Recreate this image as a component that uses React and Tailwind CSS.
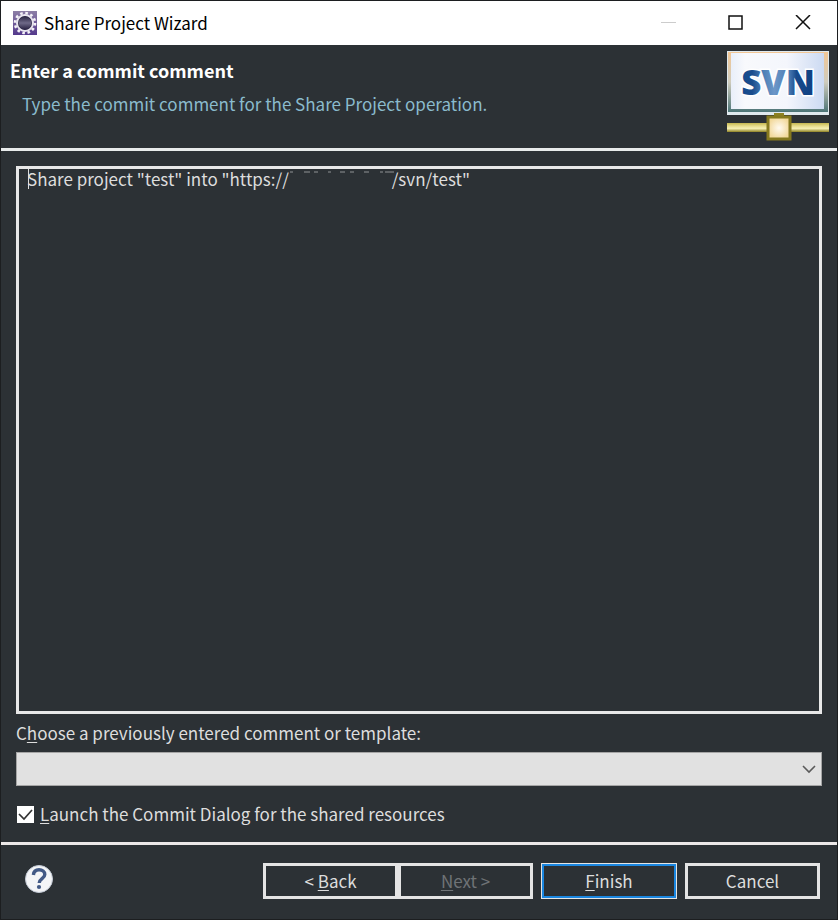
import { useState } from "react";

// gap left in the message where the host name is hidden
const HIDDEN_HOST = " ".repeat(27);

function EclipseIcon() {
  return (
    <svg width="24" height="24" viewBox="0 0 24 24" aria-hidden="true">
      <defs>
        <linearGradient id="eclipse-bg" x1="0" y1="0" x2="0" y2="1">
          <stop offset="0" stopColor="#8d7fa6" />
          <stop offset="1" stopColor="#54398c" />
        </linearGradient>
        <linearGradient id="eclipse-core" x1="0" y1="0" x2="0" y2="1">
          <stop offset="0" stopColor="#2b2644" />
          <stop offset="0.5" stopColor="#6f6a88" />
          <stop offset="1" stopColor="#2a2444" />
        </linearGradient>
      </defs>
      <rect width="24" height="24" fill="url(#eclipse-bg)" />
      <circle cx="12" cy="12" r="10" fill="none" stroke="#f4f2f7" strokeWidth="2.6" strokeDasharray="2.6 2.636" />
      <circle cx="12" cy="12" r="8" fill="#2b2545" stroke="#e9e6ef" strokeWidth="2" />
      <circle cx="12" cy="12" r="6.4" fill="url(#eclipse-core)" />
    </svg>
  );
}

function SvnLogo() {
  return (
    <svg width="102" height="90" viewBox="0 0 102 90" role="img" aria-label="SVN">
      <defs>
        <linearGradient id="svn-frame" x1="0" y1="0" x2="0" y2="1">
          <stop offset="0" stopColor="#f3c795" />
          <stop offset="0.5" stopColor="#cfccbd" />
          <stop offset="1" stopColor="#4d7577" />
        </linearGradient>
        <linearGradient id="svn-screen" x1="0" y1="0" x2="1" y2="0">
          <stop offset="0" stopColor="#e9effa" />
          <stop offset="0.15" stopColor="#f8f9fc" />
          <stop offset="0.6" stopColor="#f4f6fc" />
          <stop offset="1" stopColor="#ccdaf2" />
        </linearGradient>
        <linearGradient id="svn-text" x1="0" y1="0" x2="1" y2="0">
          <stop offset="0" stopColor="#174a8c" />
          <stop offset="0.15" stopColor="#1a4d8d" />
          <stop offset="0.3" stopColor="#4c7fb6" />
          <stop offset="0.45" stopColor="#6c97c8" />
          <stop offset="0.65" stopColor="#4a7ab2" />
          <stop offset="0.75" stopColor="#174a8c" />
          <stop offset="1" stopColor="#0f3f80" />
        </linearGradient>
        <linearGradient id="svn-pipe" x1="0" y1="0" x2="0" y2="1">
          <stop offset="0" stopColor="#c4b750" />
          <stop offset="0.3" stopColor="#e3d886" />
          <stop offset="0.6" stopColor="#f6f0b4" />
          <stop offset="1" stopColor="#8d8122" />
        </linearGradient>
        <radialGradient id="svn-node">
          <stop offset="0" stopColor="#fffaf0" />
          <stop offset="1" stopColor="#f2d99c" />
        </radialGradient>
      </defs>
      <rect width="102" height="64" fill="#e0e9ee" />
      <rect x="1" y="1" width="100" height="60" fill="url(#svn-frame)" />
      <rect x="4" y="2" width="93" height="56" fill="url(#svn-screen)" />
      <text
        x="51"
        y="44"
        textAnchor="middle"
        fontFamily="'Open Sans', sans-serif"
        fontWeight="800"
        fontSize="35"
        fill="url(#svn-text)"
        stroke="#ffffff"
        strokeWidth="3"
        paintOrder="stroke"
      >
        SVN
      </text>
      <rect x="47" y="62" width="10" height="5" fill="#8d8122" />
      <rect x="0" y="72" width="102" height="9" fill="url(#svn-pipe)" />
      <rect x="41" y="66" width="22" height="22" fill="url(#svn-node)" stroke="#85791f" strokeWidth="3" />
    </svg>
  );
}

function HelpIcon() {
  return (
    <svg width="30" height="30" viewBox="0 0 30 30" fill="none" aria-hidden="true">
      <circle cx="15" cy="16" r="13.5" fill="#f4f5f7" stroke="#c3cad6" />
      <path d="M9.400 12C9.700 8.500 12 6.800 15 6.800c3.400 0 5.800 1.700 5.800 4.600 0 4.200-5.600 4.200-5.600 8.600" stroke="#435a86" strokeWidth="3.400" />
      <circle cx="15" cy="24" r="2.100" fill="#435a86" />
    </svg>
  );
}

function TitleBar() {
  return (
    <div className="flex h-11 items-center justify-between bg-white pl-3 pr-[18px] text-black">
      <div className="flex items-center gap-[7px]">
        <EclipseIcon />
        <span>Share Project Wizard</span>
      </div>
      <div className="flex gap-[35px]">
        <button type="button" aria-label="Minimize" disabled className="flex size-8 items-center justify-center">
          <svg width="16" height="16" viewBox="0 0 16 16">
            <path d="M0 7.500h15" stroke="#cccccc" />
          </svg>
        </button>
        <button type="button" aria-label="Maximize" className="flex size-8 items-center justify-center">
          <svg width="16" height="16" viewBox="0 0 16 16" fill="none">
            <rect x="1" y="1" width="13" height="13" stroke="#111111" strokeWidth="1.500" />
          </svg>
        </button>
        <button type="button" aria-label="Close" className="flex size-8 items-center justify-center">
          <svg width="16" height="16" viewBox="0 0 16 16">
            <path d="M1 0l14 14M15 0L1 14" stroke="#111111" strokeWidth="1.500" />
          </svg>
        </button>
      </div>
    </div>
  );
}

export default function App() {
  const [comment, setComment] = useState(`Share project "test" into "https://${HIDDEN_HOST}/svn/test"`);
  const [template, setTemplate] = useState("");
  const [launch, setLaunch] = useState(true);

  return (
    <div className="flex min-h-screen flex-col border border-[#1c1e20] bg-[#2c3135] font-['Noto_Sans_CJK_KR',sans-serif] text-[17px] leading-6 text-[#dddddd]">
      <TitleBar />

      {/* Header */}
      <header className="flex justify-between border-b-3 border-[#e8ebeb] pb-[7px] pl-[9px] pr-2 pt-[6px]">
        <div className="flex flex-col gap-[10px] pt-[7px]">
          <h1 className="text-lg leading-6 font-bold text-white">Enter a commit comment</h1>
          <p className="pl-3 text-[#8abbcd]">Type the commit comment for the Share Project operation.</p>
        </div>
        <SvnLogo />
      </header>

      {/* Comment */}
      <main className="flex flex-1 flex-col px-[15px] pb-4 pt-[15px]">
        <div className="relative flex flex-1">
          <textarea
            aria-label="Commit comment"
            value={comment}
            onChange={(e) => setComment(e.target.value)}
            className="flex-1 resize-none border-3 border-[#e8e8e8] bg-transparent px-2 py-0 leading-5 outline-none"
          />
          <span className="absolute left-3 top-[3px] h-5 w-px bg-[#dddddd]" />
          <svg className="absolute left-[270px] top-[5px]" width="110" height="2" aria-hidden="true">
            <path d="M4 1h3M18 1h6M28 1h4M42 1h3M54 1h5M64 1h4M78 1h5M94 1h3M99 1h9" stroke="#8f9395" />
          </svg>
        </div>

        <label htmlFor="template" className="mt-[7px]">
          C<u className="underline-offset-2">h</u>oose a previously entered comment or template:
        </label>
        <div className="relative mt-[7px] flex">
          <select
            id="template"
            value={template}
            onChange={(e) => setTemplate(e.target.value)}
            className="h-[34px] flex-1 appearance-none border border-[#a5a5a5] bg-[#e1e1e1] px-2 text-black outline-none"
          >
            <option value=""></option>
          </select>
          <svg className="pointer-events-none absolute right-[6px] top-3" width="14" height="10" viewBox="0 0 14 10" fill="none">
            <path d="M1 2l6 6 6-6" stroke="#5a5a5a" strokeWidth="1.600" />
          </svg>
        </div>

        <div className="mt-4 flex items-center gap-[6px] pl-px">
          <div className="relative flex">
            <input
              id="launch"
              type="checkbox"
              checked={launch}
              onChange={(e) => setLaunch(e.target.checked)}
              className="peer size-[17px] appearance-none bg-white"
            />
            <svg className="pointer-events-none absolute inset-0 hidden peer-checked:block" width="17" height="17" viewBox="0 0 17 17" fill="none">
              <path d="M2 8l5 5 8-9" stroke="#333333" strokeWidth="1.700" />
            </svg>
          </div>
          <label htmlFor="launch">
            <u className="underline-offset-2">L</u>aunch the Commit Dialog for the shared resources
          </label>
        </div>
      </main>

      {/* Footer */}
      <footer className="flex items-start justify-between border-t-3 border-[#ece8e8] pb-5 pl-[23px] pr-[17px] pt-[18px]">
        <button type="button" aria-label="Help">
          <HelpIcon />
        </button>
        <div className="flex gap-2">
          <div className="flex">
            <button type="button" className="h-9 w-[135px] border-3 border-[#e4e4e4]">
              &lt; <u className="underline-offset-2">B</u>ack
            </button>
            <button type="button" disabled className="h-9 w-[135px] border-3 border-[#e4e4e4] text-[#6f7376]">
              <u className="underline-offset-2">N</u>ext &gt;
            </button>
          </div>
          <button type="button" className="h-9 w-[136px] border border-[#e4e4e4] outline-2 -outline-offset-3 outline-[#1a86e0]">
            <u className="underline-offset-2">F</u>inish
          </button>
          <button type="button" className="h-9 w-[135px] border-3 border-[#e4e4e4]">
            Cancel
          </button>
        </div>
      </footer>
    </div>
  );
}
